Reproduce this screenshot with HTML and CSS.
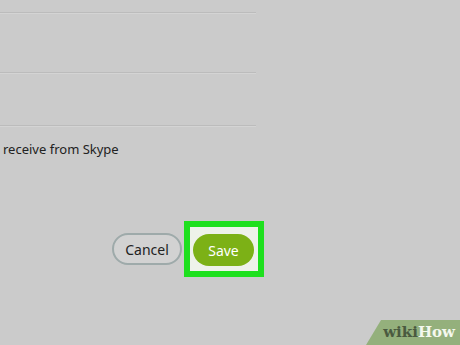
FILE: index.html
```html
<!DOCTYPE html>
<html lang="en">
<head>
  <meta charset="UTF-8">
  <title>Skype settings</title>
  <link rel="stylesheet" href="styles.css">
</head>
<body>
  <div class="panel">
    <div class="field first"></div>
    <div class="field second"></div>
    <div class="field third"></div>
    <p class="note">receive from Skype</p>
  </div>

  <div class="actions">
    <button class="btn cancel">Cancel</button>
    <div class="highlight">
      <button class="btn save">Save</button>
    </div>
  </div>

  <div class="watermark"><span class="wiki">wiki</span><span class="how">How</span></div>
</body>
</html>
```

FILE: styles.css
```css
body {
  margin: 0;
  background-color: #cbcbcb;
  font-family: "Noto Sans", "Open Sans", sans-serif;
  color: #222;
  height: 345px;
  overflow: hidden;
  position: relative;
}
.panel {
  width: 256px;
}
.field {
  border-bottom: 1px solid #bcbcbc;
  box-shadow: 0 1px 0 #d4d4d4;
}
.field.first {
  height: 12px;
}
.field.second {
  height: 59px;
}
.field.third {
  height: 52px;
}
.note {
  margin: 14px 0 0 3px;
  font-size: 13px;
  line-height: 18px;
}
.actions {
  display: flex;
  align-items: center;
  justify-content: flex-end;
  width: 264px;
  margin-top: 63px;
}
.btn {
  font-family: "Noto Sans", "Open Sans", sans-serif;
  font-size: 14px;
  height: 32px;
  border-radius: 16px;
  cursor: pointer;
  padding: 0;
}
.cancel {
  width: 70px;
  margin-right: 2px;
  background-color: #d2d2d2;
  border: 2px solid #9eaaaa;
  color: #222;
}
.highlight {
  border: 6px solid #1ee01e;
  background-color: #eef2ea;
  padding: 7px 4px 5px 3px;
}
.save {
  width: 61px;
  border: none;
  background-color: #7cb116;
  color: #fff;
}
.watermark {
  position: absolute;
  right: 0;
  bottom: 0;
  width: 94px;
  height: 25px;
  background-color: #94b07c;
  clip-path: polygon(16% 0, 100% 0, 100% 100%, 0 100%);
  font-family: "DejaVu Serif", "Liberation Serif", serif;
  font-weight: bold;
  font-size: 15px;
  line-height: 25px;
  text-align: right;
  padding-right: 5px;
  box-sizing: border-box;
}
.wiki {
  color: #4a5a40;
}
.how {
  color: #f4f8ee;
}
```
